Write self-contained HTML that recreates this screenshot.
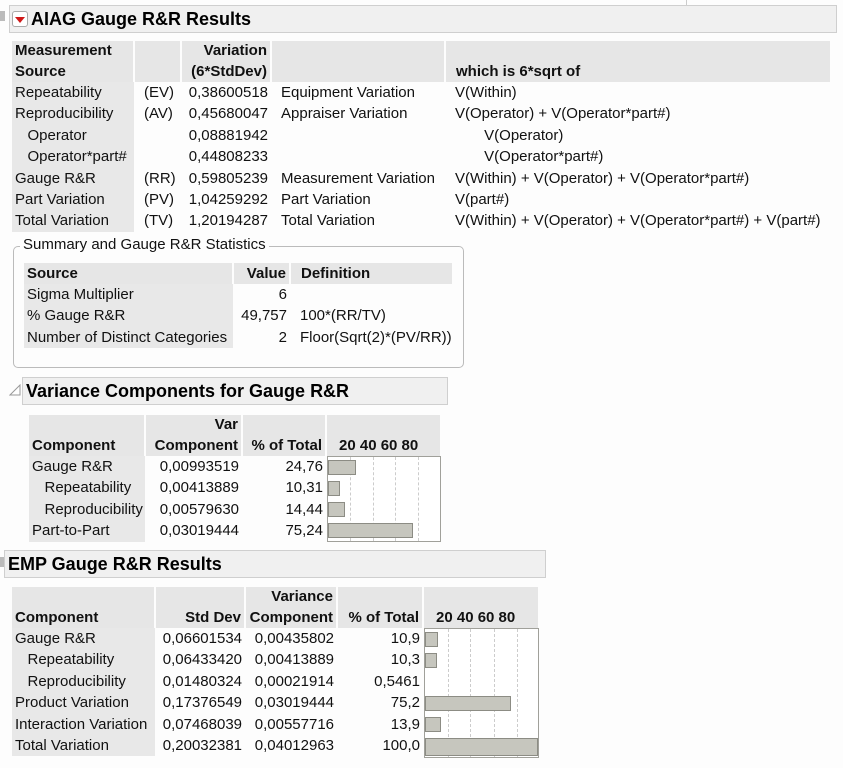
<!DOCTYPE html>
<html><head><meta charset="utf-8"><style>
body{margin:0;width:843px;height:768px;background:#fdfdfd;font-family:"Liberation Sans",sans-serif;font-size:15px;color:#111;position:relative;overflow:hidden}
.hdr{position:absolute;background:#f0f0f0;border:1px solid #cfcfcf;height:26px;font-weight:bold;font-size:18px;line-height:26px;color:#000}
table{position:absolute;border-collapse:collapse;table-layout:fixed;font-size:15px}
th{background:#e6e6e6;border-right:2px solid #fdfdfd;font-weight:bold;vertical-align:bottom;padding:0 3px;line-height:20.5px;white-space:nowrap}
th:last-child{border-right:none}
td{height:21.4px;padding:0 3px;white-space:nowrap;line-height:21.4px;overflow:visible}
td.f{background:#e8e8e8}
td.p{padding-left:10px}
.r{text-align:right}.l{text-align:left}
.chart{position:absolute;background:#fff;border:1px solid #a0a09a}
.g{position:absolute;top:0;bottom:0;border-left:1px dashed #ccc}
.b{position:absolute;left:0;height:15px;background:#c6c6be;border:1px solid #8c8c84;box-sizing:border-box}
</style></head><body>
<div style="position:absolute;left:0;top:11px;width:5px;height:10px;background:#bbb"></div>
<div style="position:absolute;left:686px;top:0;width:1px;height:5px;background:#ccc"></div>
<div class="hdr" style="left:9px;top:5px;width:826px;"><span style="position:absolute;left:2px;top:5px;width:14px;height:14px;border:1px solid #aaa;border-radius:3px;background:#fff"></span><span style="position:absolute;left:5px;top:11px;width:0;height:0;border-left:5px solid transparent;border-right:5px solid transparent;border-top:6px solid #d01818"></span><span style="position:absolute;left:21px">AIAG Gauge R&amp;R Results</span></div>

<table style="left:12px;top:41px;width:818px">
<colgroup><col style="width:122px"><col style="width:47px"><col style="width:90px"><col style="width:174px"><col style="width:385px"></colgroup>
<tr><th class="l">Measurement<br>Source</th><th></th><th class="r">Variation<br>(6*StdDev)</th><th></th><th class="l" style="padding-left:10px">which is 6*sqrt of</th></tr>
<tr><td class="f">Repeatability</td><td class="p">(EV)</td><td class="r">0,38600518</td><td class="p">Equipment Variation</td><td class="p">V(Within)</td></tr>
<tr><td class="f">Reproducibility</td><td class="p">(AV)</td><td class="r">0,45680047</td><td class="p">Appraiser Variation</td><td class="p">V(Operator) + V(Operator*part#)</td></tr>
<tr><td class="f">&nbsp;&nbsp;&nbsp;Operator</td><td></td><td class="r">0,08881942</td><td></td><td class="p">&nbsp;&nbsp;&nbsp;&nbsp;&nbsp;&nbsp;&nbsp;V(Operator)</td></tr>
<tr><td class="f">&nbsp;&nbsp;&nbsp;Operator*part#</td><td></td><td class="r">0,44808233</td><td></td><td class="p">&nbsp;&nbsp;&nbsp;&nbsp;&nbsp;&nbsp;&nbsp;V(Operator*part#)</td></tr>
<tr><td class="f">Gauge R&amp;R</td><td class="p">(RR)</td><td class="r">0,59805239</td><td class="p">Measurement Variation</td><td class="p">V(Within) + V(Operator) + V(Operator*part#)</td></tr>
<tr><td class="f">Part Variation</td><td class="p">(PV)</td><td class="r">1,04259292</td><td class="p">Part Variation</td><td class="p">V(part#)</td></tr>
<tr><td class="f">Total Variation</td><td class="p">(TV)</td><td class="r">1,20194287</td><td class="p">Total Variation</td><td class="p">V(Within) + V(Operator) + V(Operator*part#) + V(part#)</td></tr>
</table>

<div style="position:absolute;left:13px;top:246px;width:449px;height:120px;border:1px solid #bbb;border-radius:5px"></div>
<div style="position:absolute;left:20px;top:236px;background:#fdfdfd;padding:0 3px;line-height:18px">Summary and Gauge R&amp;R Statistics</div>
<table style="left:24px;top:263px;width:428px">
<colgroup><col style="width:209px"><col style="width:57px"><col style="width:162px"></colgroup>
<tr><th class="l" style="line-height:21px">Source</th><th class="r">Value</th><th class="l" style="padding-left:10px">Definition</th></tr>
<tr><td class="f">Sigma Multiplier</td><td class="r">6</td><td></td></tr>
<tr><td class="f">% Gauge R&amp;R</td><td class="r">49,757</td><td class="p">100*(RR/TV)</td></tr>
<tr><td class="f">Number of Distinct Categories</td><td class="r">2</td><td class="p">Floor(Sqrt(2)*(PV/RR))</td></tr>
</table>

<svg style="position:absolute;left:9px;top:384px" width="12" height="12"><polygon points="1,11 11,11 11,1" fill="#fff" stroke="#999"/></svg>
<div class="hdr" style="left:22px;top:377px;width:424px;"><span style="position:absolute;left:3px">Variance Components for Gauge R&amp;R</span></div>

<table style="left:29px;top:415px;width:411px">
<colgroup><col style="width:116px"><col style="width:97px"><col style="width:84px"><col style="width:114px"></colgroup>
<tr><th class="l">Component</th><th class="r">Var<br>Component</th><th class="r">% of Total</th><th class="l" style="padding-left:12px">20 40 60 80</th></tr>
<tr><td class="f">Gauge R&amp;R</td><td class="r">0,00993519</td><td class="r">24,76</td><td></td></tr>
<tr><td class="f">&nbsp;&nbsp;&nbsp;Repeatability</td><td class="r">0,00413889</td><td class="r">10,31</td><td></td></tr>
<tr><td class="f">&nbsp;&nbsp;&nbsp;Reproducibility</td><td class="r">0,00579630</td><td class="r">14,44</td><td></td></tr>
<tr><td class="f">Part-to-Part</td><td class="r">0,03019444</td><td class="r">75,24</td><td></td></tr>
</table>
<div class="chart" style="left:327px;top:456px;width:112px;height:84px">
<div class="g" style="left:22px"></div><div class="g" style="left:45px"></div><div class="g" style="left:67px"></div><div class="g" style="left:90px"></div>
<div class="b" style="top:3px;width:28px"></div>
<div class="b" style="top:24px;width:12px"></div>
<div class="b" style="top:45px;width:17px"></div>
<div class="b" style="top:66px;width:85px"></div>
</div>

<div style="position:absolute;left:0;top:557px;width:4px;height:10px;background:#bbb"></div>
<div class="hdr" style="left:4px;top:550px;width:540px;"><span style="position:absolute;left:3px">EMP Gauge R&amp;R Results</span></div>

<table style="left:12px;top:587px;width:526px">
<colgroup><col style="width:143px"><col style="width:90px"><col style="width:92px"><col style="width:86px"><col style="width:115px"></colgroup>
<tr><th class="l">Component</th><th class="r">Std Dev</th><th class="r">Variance<br>Component</th><th class="r">% of Total</th><th class="l" style="padding-left:12px">20 40 60 80</th></tr>
<tr><td class="f">Gauge R&amp;R</td><td class="r">0,06601534</td><td class="r">0,00435802</td><td class="r">10,9</td><td></td></tr>
<tr><td class="f">&nbsp;&nbsp;&nbsp;Repeatability</td><td class="r">0,06433420</td><td class="r">0,00413889</td><td class="r">10,3</td><td></td></tr>
<tr><td class="f">&nbsp;&nbsp;&nbsp;Reproducibility</td><td class="r">0,01480324</td><td class="r">0,00021914</td><td class="r">0,5461</td><td></td></tr>
<tr><td class="f">Product Variation</td><td class="r">0,17376549</td><td class="r">0,03019444</td><td class="r">75,2</td><td></td></tr>
<tr><td class="f">Interaction Variation</td><td class="r">0,07468039</td><td class="r">0,00557716</td><td class="r">13,9</td><td></td></tr>
<tr><td class="f">Total Variation</td><td class="r">0,20032381</td><td class="r">0,04012963</td><td class="r">100,0</td><td></td></tr>
</table>
<div class="chart" style="left:424px;top:628px;width:113px;height:128px">
<div class="g" style="left:23px"></div><div class="g" style="left:45px"></div><div class="g" style="left:69px"></div><div class="g" style="left:92px"></div>
<div class="b" style="top:3px;width:13px"></div>
<div class="b" style="top:24px;width:12px"></div>
<div class="b" style="top:67px;width:86px"></div>
<div class="b" style="top:88px;width:16px"></div>
<div class="b" style="top:109px;width:113px;height:18px"></div>
</div>
</body></html>
